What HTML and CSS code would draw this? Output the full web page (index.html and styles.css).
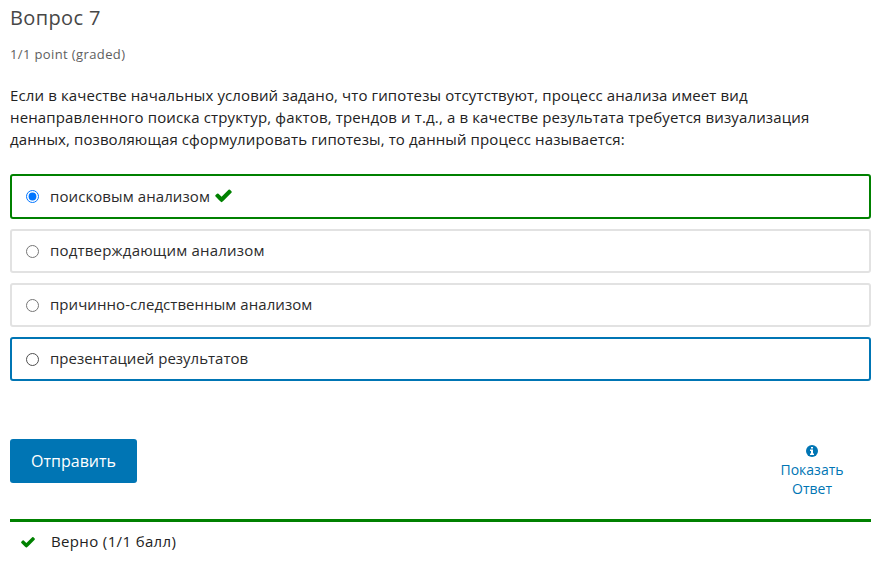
FILE: index.html
```html
<!DOCTYPE html>
<html lang="ru">
<head>
<meta charset="utf-8">
<title>Вопрос 7</title>
<link rel="stylesheet" href="styles.css">
</head>
<body>
<main class="problem">
  <h3 class="title">Вопрос 7</h3>
  <p class="progress">1/1 point (graded)</p>
  <p class="question"><span class="line-1">Если в качестве начальных условий задано, что гипотезы отсутствуют, процесс анализа имеет вид</span><br><span class="line-2">ненаправленного поиска структур, фактов, трендов и т.д., а в качестве результата требуется визуализация</span><br><span class="line-3">данных, позволяющая сформулировать гипотезы, то данный процесс называется:</span></p>
  <div class="choices">
    <label class="choice correct"><input type="radio" name="c" checked><span class="text text-1">поисковым анализом</span><svg class="check" viewBox="0 0 1792 1792"><path d="M1671 566q0 40-28 68l-724 724-136 136q-28 28-68 28t-68-28l-136-136-362-362q-28-28-28-68t28-68l136-136q28-28 68-28t68 28l294 295 656-657q28-28 68-28t68 28l136 136q28 28 28 68z"/></svg></label>
    <label class="choice"><input type="radio" name="c"><span class="text text-2">подтверждающим анализом</span></label>
    <label class="choice"><input type="radio" name="c"><span class="text text-3">причинно-следственным анализом</span></label>
    <label class="choice hovered"><input type="radio" name="c"><span class="text">презентацией результатов</span></label>
  </div>
  <div class="action">
    <button class="submit">Отправить</button>
    <a class="show"><svg class="info" viewBox="0 0 12 12"><circle cx="6" cy="6" r="6"/><path fill="#fff" d="M5 2h2v1.5H5zM4 4.5h3v4h1V10H4V8.500h1V6H4z"/></svg><span>Показать<br>Ответ</span></a>
  </div>
  <div class="feedback"><svg class="check" viewBox="0 0 1792 1792"><path d="M1671 566q0 40-28 68l-724 724-136 136q-28 28-68 28t-68-28l-136-136-362-362q-28-28-28-68t28-68l136-136q28-28 68-28t68 28l294 295 656-657q28-28 68-28t68 28l136 136q28 28 28 68z"/></svg><span>Верно (1/1 балл)</span></div>
</main>
</body>
</html>
```
FILE: styles.css
```css
* { box-sizing: border-box; }
body { margin: 0; background: #fff; color: #222; font: 15px/22px "Open Sans", "Noto Sans", sans-serif; }
.problem { padding: 4px 13px 0 10px; }
.title { margin: 0; font-size: 20px; line-height: 28px; font-weight: 400; color: #474747; letter-spacing: 0.38px; }
.progress { margin: 12px 0 0; font-size: 13px; line-height: 20px; color: #5e5e5e; letter-spacing: 0.38px; }
.question { margin: 20px 0 0; white-space: nowrap; }
.line-1 { letter-spacing: 0.12px; }
.line-2 { letter-spacing: 0.136px; }
.line-3 { letter-spacing: 0.11px; }
.choices { margin-top: 24px; display: flex; flex-direction: column; gap: 10px; }
.choice { height: 44px; border: 2px solid #e2e2e2; border-radius: 3px; display: flex; align-items: center; padding-left: 14px; color: #2b2b2b; }
.choice input { width: 13px; height: 13px; margin: 0 11px 0 0; }
.text { padding-bottom: 2px; }
.text-1 { letter-spacing: 0.09px; }
.text-2 { letter-spacing: 0.2px; }
.text-3 { letter-spacing: 0.06px; }
.correct { border-color: #008100; height: 45px; }
.hovered { border-color: #0075b4; }
.hovered input { appearance: none; border: 1px solid #4f4f4f; border-radius: 50%; }
.check { fill: #008100; width: 19px; height: 19px; margin: 0 0 2px 4px; }
.action { margin-top: 58px; height: 80px; display: flex; justify-content: space-between; align-items: flex-start; }
.submit { width: 127px; height: 44px; border: 0; border-radius: 3px; background: #0075b4; color: #fff; font: 16px "Open Sans", sans-serif; padding: 0; }
.show { width: 118px; padding-top: 6px; display: flex; flex-direction: column; align-items: center; text-align: center; font-size: 14px; line-height: 19px; color: #0075b4; }
.info { width: 12px; height: 12px; fill: #0075b4; margin-bottom: 3px; }
.feedback { border-top: 3px solid #008100; height: 41px; display: flex; align-items: center; padding-left: 10px; letter-spacing: 0.36px; }
.feedback .check { width: 16px; height: 16px; margin: 2px 15px 0 0; }
```
